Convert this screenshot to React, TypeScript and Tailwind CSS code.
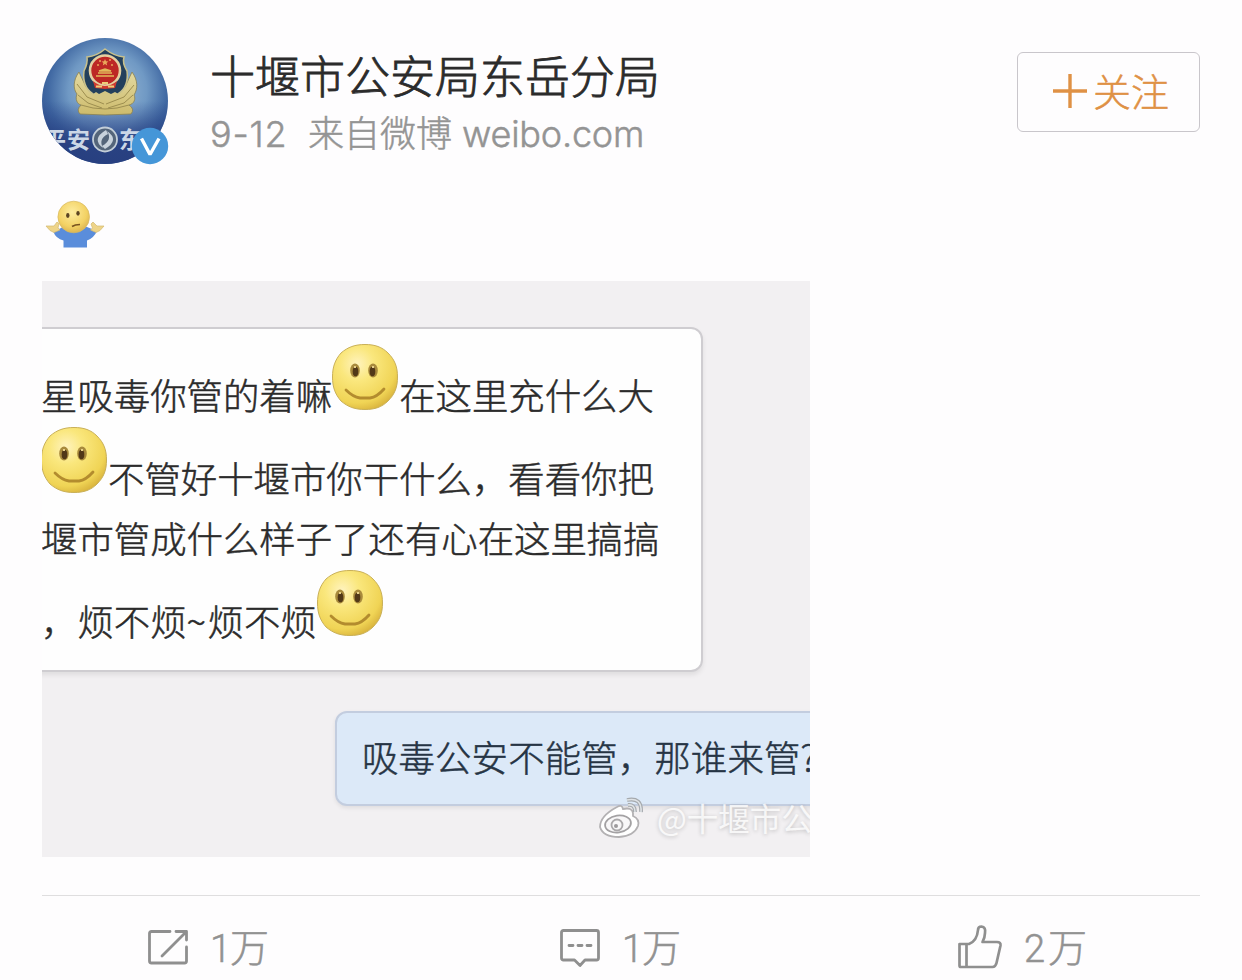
import React from 'react';

const Avatar: React.FC = () => (
    <svg viewBox="0 0 126 126" className="block h-[126px] w-[126px] rounded-full">
        <defs>
            <radialGradient id="sky" cx="0.52" cy="0.42" r="0.62">
                <stop offset="0" stopColor="#a3c0da" />
                <stop offset="0.5" stopColor="#7099c4" />
                <stop offset="0.76" stopColor="#4169a3" />
                <stop offset="1" stopColor="#2f4f8b" />
            </radialGradient>
            <linearGradient id="ground" x1="0" y1="0" x2="0" y2="1">
                <stop offset="0.5" stopColor="#243e85" stopOpacity="0" />
                <stop offset="0.85" stopColor="#263d7e" stopOpacity="0.9" />
            </linearGradient>
            <linearGradient id="wheat" x1="0" y1="0" x2="0" y2="1">
                <stop offset="0" stopColor="#e3d9a0" />
                <stop offset="1" stopColor="#cdbb6c" />
            </linearGradient>
        </defs>
        <rect width="126" height="126" fill="url(#sky)" />
        <rect width="126" height="126" fill="url(#ground)" />
        {/* wreath */}
        <path d="M37 34 C31 42 31 51 35 56 C33 61 35 66 39 67 Q34 72 38 76 L63 77 L89 76 Q93 71 87 67 C92 66 94 61 92 57 C96 51 96 42 90 34 L83 49 L63 59 L44 49 Z" fill="url(#wheat)" stroke="#8a8250" strokeWidth="0.8" />
        <path d="M35 46 L45 59 L62 66 M36 57 L46 65 L60 70 M92 47 L82 59 L64 66 M91 57 L82 65 L66 70 M39 67 Q63 75 87 67" fill="none" stroke="#9d8e50" strokeWidth="1" />
        {/* shield */}
        <path d="M63 11 Q55 18 45 19 Q46 25 42 33 Q40 49 51 56 L63 60 L76 56 Q87 49 85 33 Q80 25 82 19 Q72 18 63 11 Z" fill="#24405c" stroke="#c9c18c" strokeWidth="1.5" />
        <path d="M50 57 L54 54 L57 56 L63 53 L69 56 L73 54 L78 57 L70 62 H57 Z" fill="#d3c684" />
        <circle cx="63" cy="32.5" r="15" fill="#bd2825" stroke="#e4cfa0" strokeWidth="2.6" />
        <path d="M54 38 H72 M56 35 H70 M57 33 L63 31 L69 33 Z" fill="#e1b95a" stroke="#e1b95a" strokeWidth="1.4" />
        <path d="M63 21 l1 2.2 2.4 .2 -1.8 1.6 .6 2.4 -2.2 -1.3 -2.2 1.3 .6 -2.4 -1.8 -1.6 2.4 -.2z" fill="#e9a75a" />
        <path d="M55 27h2 M69 27h2 M57 23h2 M67 22h2" stroke="#e9a75a" strokeWidth="1.6" />
        <path d="M51 43 Q63 53 75 43 L73 50 L63 51 L53 50 Z" fill="#cf3a30" />
        <path d="M54 48.5 H60 M66 48.5 H72 M60 45 H66" stroke="#edce78" strokeWidth="1.8" />
        <g fill="#ccd7e6" fontFamily="'Noto Sans CJK SC', sans-serif" fontWeight="700" fontSize="23">
            <text x="1" y="110">平</text>
            <text x="25" y="110">安</text>
            <text x="77" y="110">东</text>
        </g>
        <circle cx="63" cy="101.5" r="12" fill="#54657a" stroke="#c3ced8" strokeWidth="1.8" />
        <path d="M64 92 Q49 101 61 110 Q56 101 66 96 Z M63 111 Q78 102 65 93 Q71 102 60 108 Z" fill="#c8d2dc" />
    </svg>
);

const VerifiedBadge: React.FC = () => (
    <svg viewBox="0 0 38 38" className="absolute top-[89px] left-[89px] h-[38px] w-[38px]">
        <circle cx="19" cy="19" r="18.2" fill="#4596d8" />
        <path d="M10.5 11.5 L19 27.5 L28 11.5" fill="none" stroke="#fff" strokeWidth="3.4" strokeLinejoin="bevel" />
    </svg>
);

const Shrug: React.FC = () => (
    <svg viewBox="0 0 60 50" className="block h-[50px] w-[60px]">
        <defs>
            <radialGradient id="face" cx="0.45" cy="0.35" r="0.65">
                <stop offset="0" stopColor="#fdec9f" />
                <stop offset="0.7" stopColor="#f3d264" />
                <stop offset="1" stopColor="#dcb552" />
            </radialGradient>
        </defs>
        <path d="M8 31 L14 29 L18 27 H42 L47 29 L52 31 Q49 38 42 40.5 V47.5 H18.5 V40.5 Q11 39 8 31 Z" fill="#5a8ddb" />
        <path d="M1 26 L9 26 L12 22 L14 24 L13 28 L15 30 L9 32.5 L5 30.5 Z M59 26 L52 26 L48 22 L46 24 L47.5 28 L45.5 30 L51 32.5 L55 30.5 Z" fill="#eed489" stroke="#d3b970" strokeWidth="0.7" />
        <circle cx="28.7" cy="17" r="15.8" fill="url(#face)" stroke="#d7b962" strokeWidth="0.7" />
        <ellipse cx="22.8" cy="15.5" rx="1.7" ry="2.4" fill="#5b4422" />
        <ellipse cx="33" cy="13.3" rx="1.7" ry="2.4" fill="#5b4422" />
        <path d="M27 26.5 Q30 24.5 35 24.5" fill="none" stroke="#795420" strokeWidth="1.6" />
    </svg>
);

const Smiley: React.FC = () => (
    <svg viewBox="0 0 66 66" className="block h-[66px] w-[66px] shrink-0">
        <defs>
            <radialGradient id="smile" cx="0.38" cy="0.3" r="0.75">
                <stop offset="0" stopColor="#fff3bd" />
                <stop offset="0.35" stopColor="#fae77d" />
                <stop offset="0.8" stopColor="#f0d455" />
                <stop offset="1" stopColor="#d8b23c" />
            </radialGradient>
        </defs>
        <path d="M33 0.5 C43 0.5 50 3 56 9 C63 16 65.5 23 65.5 33 C65.5 43 63 50 56 57 C50 63 43 65.5 33 65.5 C23 65.5 16 63 9 57 C3 50 0.5 43 0.5 33 C0.5 23 3 16 9 9 C16 3 23 0.5 33 0.5 Z" fill="url(#smile)" stroke="#c9b058" strokeWidth="1" />
        <ellipse cx="23" cy="26.5" rx="4.8" ry="7" fill="#a88a3c" />
        <ellipse cx="41" cy="26.5" rx="4.8" ry="7" fill="#a88a3c" />
        <ellipse cx="23.5" cy="27.5" rx="2.8" ry="4.8" fill="#513818" />
        <ellipse cx="40.5" cy="27.5" rx="2.8" ry="4.8" fill="#513818" />
        <path d="M22 23h2 M40 23h2" stroke="#e8d08a" strokeWidth="2" />
        <path d="M14 46 Q21 53 28 54 H38 Q45 53 52 45" fill="none" stroke="#b38c2e" strokeWidth="2.8" strokeLinecap="round" />
    </svg>
);

const WeiboMark: React.FC = () => (
    <svg viewBox="0 0 46 42" className="block h-[42px] w-[46px]">
        <path d="M18 10 Q23 7 24 12 Q33 10 34 16 L34 19 Q41 22 39 29 Q35 39 20 40 Q4 40 1 30 Q1 19 18 10 Z" fill="#fff" stroke="#b3b1b3" strokeWidth="1.8" />
        <ellipse cx="19" cy="27" rx="13" ry="8.5" fill="#f8f7f8" stroke="#a3a1a3" strokeWidth="1.8" transform="rotate(-8 19 27)" />
        <circle cx="18" cy="28" r="5.5" fill="none" stroke="#aaa8aa" strokeWidth="1.8" />
        <circle cx="17" cy="29" r="2" fill="#9c9a9c" />
        <path d="M29 8 Q36 7 36 15 M28 3 Q43 0 42 15" fill="none" stroke="#a5a9ad" strokeWidth="3.8" />
        <path d="M29 8 Q36 7 36 15 M28 3 Q43 0 42 15" fill="none" stroke="#dfe3e6" strokeWidth="1.6" />
    </svg>
);

const RepostIcon: React.FC = () => (
    <svg viewBox="0 0 42 38" className="block h-[38px] w-[42px]" fill="none" stroke="#8f8f8f" strokeWidth="2.8" strokeLinecap="round" strokeLinejoin="round">
        <path d="M23 2.5 H4.5 Q2.5 2.5 2.5 4.5 V32 Q2.5 34 4.5 34 H37.5 Q39.5 34 39.5 32 V18 M29 2.5 H39.5 V11 M38.5 3.5 L15 27" />
    </svg>
);

const CommentIcon: React.FC = () => (
    <svg viewBox="0 0 42 40" className="block h-[40px] w-[42px]" fill="none" stroke="#8f8f8f" strokeWidth="2.8" strokeLinecap="round" strokeLinejoin="round">
        <path d="M4.5 2.5 H37.5 Q39.5 2.5 39.5 4.5 V30 Q39.5 32 37.5 32 H26 L21 37.5 L15.5 32 H4.5 Q2.5 32 2.5 30 V4.5 Q2.5 2.5 4.5 2.5 Z M10 17.5 h4 M19 17.5 h4 M28 17.5 h4" />
    </svg>
);

const LikeIcon: React.FC = () => (
    <svg viewBox="0 0 46 46" className="-mt-[3px] block h-[46px] w-[46px]" fill="none" stroke="#8f8f8f" strokeWidth="2.7" strokeLinejoin="round">
        <path d="M2.5 20 H12 Q20 17 21 6 Q21 2.5 24.5 2.5 Q29 3 28 9 Q28 13 25.5 18 H40 Q44 18 43.5 21.5 L39.5 39 Q38.5 43 35.5 43 H4 Q2.5 43 2.5 41.5 Z M9.5 20 V43" />
    </svg>
);

const Action: React.FC<{ icon: React.ReactNode; count: string; className: string; countClass?: string }> = ({ icon, count, className, countClass = 'w-[20px]' }) => (
    <div className={`flex items-center ${className}`}>
        {icon}
        <span className="ml-[21px] flex items-baseline pb-[2px] font-light text-[#929292] [-webkit-text-stroke:0.5px]">
            <span className={`font-['Roboto'] text-[38px] leading-[44px] ${countClass}`}>{count}</span>
            <span className="text-[39px] leading-[44px]">万</span>
        </span>
    </div>
);

const Words: React.FC<{ children: React.ReactNode; className?: string }> = ({ children, className = 'mt-[32px]' }) => (
    <span className={`block h-[37px] shrink-0 text-[36.4px] leading-[37px] whitespace-nowrap [-webkit-text-stroke:0.5px] ${className}`}>{children}</span>
);

const ChatPhoto: React.FC = () => (
    <div className="relative mt-[31px] h-[576px] w-[768px] overflow-hidden bg-[#f2f0f2] pt-[46px]">
        <div className="-ml-3 h-[345px] w-[673px] rounded-[12px] border-2 border-[#cfcdd1] bg-[#fefefe] pt-[15px] pl-[9px] font-light text-[#2b2b2b] shadow-[0_3px_5px_rgba(0,0,0,0.08)]">
            <div className="flex h-[83px]">
                <Words>星吸毒你管的着嘛</Words>
                <Smiley />
                <Words className="mt-[32px] ml-px">在这里充什么大</Words>
            </div>
            <div className="flex h-[83px]">
                <Smiley />
                <Words className="mt-[32px] ml-px">不管好十堰市你干什么，看看你把</Words>
            </div>
            <div className="flex h-[60px]">
                <Words className="mt-[9px]">堰市管成什么样子了还有心在这里搞搞</Words>
            </div>
            <div className="flex">
                <Words>，烦不烦</Words>
                <Words className="mt-[32px] w-[21px]">~</Words>
                <Words>烦不烦</Words>
                <Smiley />
            </div>
        </div>
        <div className="mt-[39px] ml-[293px] h-[95px] w-[520px] rounded-[12px] border-2 border-[#c3cddf] bg-[#dce9f8] pt-[25px] pl-[25px] font-light text-[#263444] shadow-[0_2px_4px_rgba(0,0,0,0.08)]">
            <Words className="tracking-[0.15px]">吸毒公安不能管，那谁来管?</Words>
        </div>
        <div className="absolute top-[516px] left-[557px] flex items-center">
            <WeiboMark />
            <span className="-mt-[3px] ml-[12px] text-[31.5px] leading-[42px] whitespace-nowrap text-white/80 [text-shadow:0_1px_4px_rgba(0,0,0,0.22)]">@十堰市公</span>
        </div>
    </div>
);

export default function App() {
    return (
        <div className="h-[980px] w-[1242px] overflow-hidden bg-[#fefdfe] px-[42px] pt-[38px] font-['Noto_Sans_CJK_SC',sans-serif]">
            <header className="flex h-[126px]">
                <div className="relative h-[126px] w-[126px]">
                    <Avatar />
                    <VerifiedBadge />
                </div>
                <div className="ml-[42px] pt-[9px]">
                    <h1 className="text-[45px] leading-[56px] font-light whitespace-nowrap text-[#2b2b2b] [-webkit-text-stroke:0.8px]">十堰市公安局东岳分局</h1>
                    <p className="flex items-baseline text-[36px] leading-[56px] font-light whitespace-nowrap text-[#949494] [-webkit-text-stroke:0.5px]">
                        <span className="w-[98px] font-['Inter'] tracking-[0.8px]">9-12</span>
                        <span>来自微博</span>
                        <span className="ml-[10px] font-['Inter'] tracking-[-0.2px]">weibo.com</span>
                    </p>
                </div>
                <button className="mt-[14px] ml-auto flex h-[80px] w-[183px] items-center rounded-[6px] border border-[#c9c6cb] pl-[35px] text-[38px] font-light text-[#df9145] [-webkit-text-stroke:0.5px]">
                    <svg viewBox="0 0 34 34" className="-mt-[3px] h-[34px] w-[34px]" fill="none" stroke="#df9145" strokeWidth="3.4">
                        <path d="M17 0 V34 M0 17 H34" />
                    </svg>
                    <span className="-mt-[5px] ml-[6px] whitespace-nowrap">关注</span>
                </button>
            </header>
            <div className="mt-[36px] ml-[3px]">
                <Shrug />
            </div>
            <ChatPhoto />
            <footer className="mt-[38px] flex h-[85px] items-start border-t border-[#dfdedf] pt-[28px]">
                <Action icon={<RepostIcon />} count="1" className="ml-[105px] h-[48px]" />
                <Action icon={<CommentIcon />} count="1" className="ml-[290px] h-[48px]" />
                <Action icon={<LikeIcon />} count="2" countClass="w-[24px]" className="ml-[276px] h-[48px]" />
            </footer>
        </div>
    );
}
